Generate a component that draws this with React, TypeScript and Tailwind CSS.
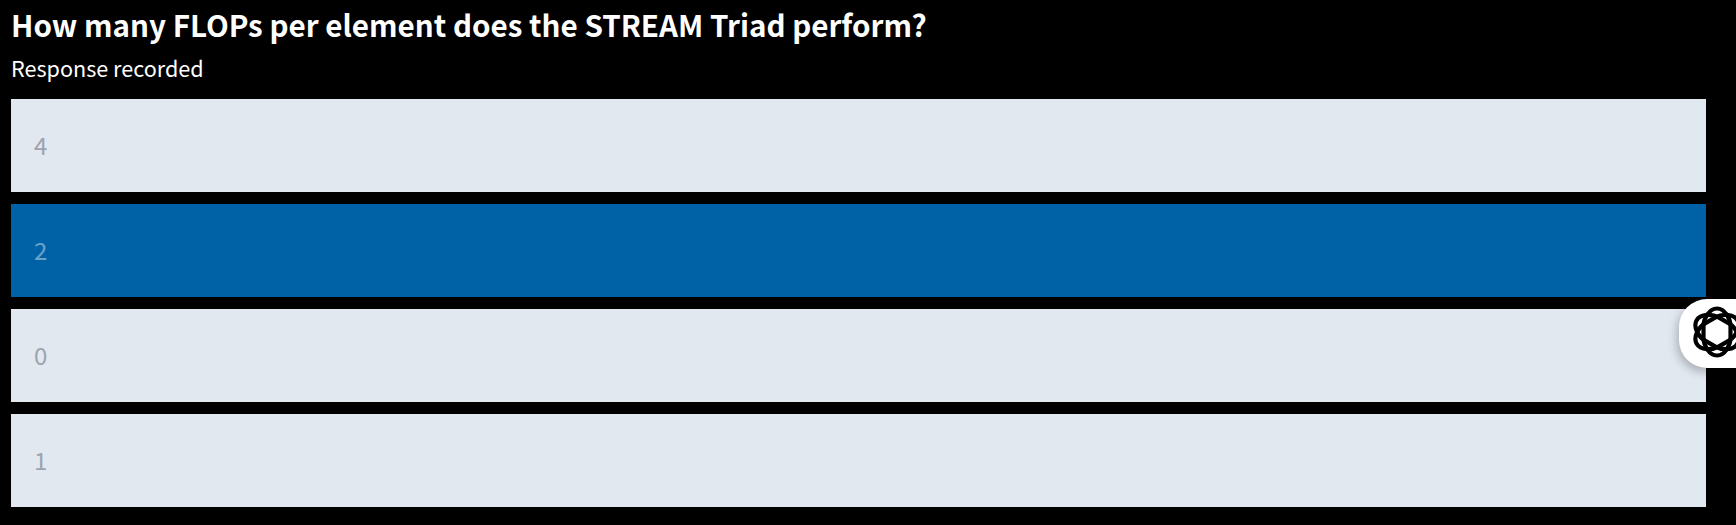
export default function App() {
  const rows = [
    { label: "4", selected: false },
    { label: "2", selected: true },
    { label: "0", selected: false },
    { label: "1", selected: false },
  ];
  const ring = "M0 -23.5 C8 -23.5 13.5 -13 13.5 -6 L13.5 6 C13.5 13 8 23.5 0 23.5 C-8 23.5 -13.5 13 -13.5 6 L-13.5 -6 C-13.5 -13 -8 -23.5 0 -23.5 Z";
  return (
    <div className="relative h-[525px] w-[1736px] overflow-hidden bg-black pl-[11px] pr-[30px] font-['Noto_Sans_CJK_JP',sans-serif]">
      <h1 className="pt-[5px] text-[29.6px] font-bold leading-[40px] text-white">How many FLOPs per element does the STREAM Triad perform?</h1>
      <p className="mt-[7px] text-[21.6px] leading-[32px] text-white">Response recorded</p>
      <div className="mt-[15px] flex flex-col gap-[12px]">
        {rows.map((r) => (
          <div key={r.label} className={`flex h-[93px] items-center pb-[2px] pl-[23px] text-[24px] ${r.selected ? "bg-[#0062a6] text-[#6aa3ca]" : "bg-[#e2e8f0] text-[#9ca3af]"}`}>
            {r.label}
          </div>
        ))}
      </div>
      <div className="absolute left-[1679px] top-[299px] flex h-[69px] w-[80px] items-center rounded-l-[28px] bg-white pl-[11px] shadow-[-2px_4px_10px_rgba(0,0,0,0.25)]">
        <svg className="mb-[3px]" width="54" height="54" viewBox="-27 -27 54 54" fill="none" stroke="black" strokeWidth="4.2">
          <path d={ring} />
          <path d={ring} transform="rotate(60)" />
          <path d={ring} transform="rotate(120)" />
        </svg>
      </div>
    </div>
  );
}
